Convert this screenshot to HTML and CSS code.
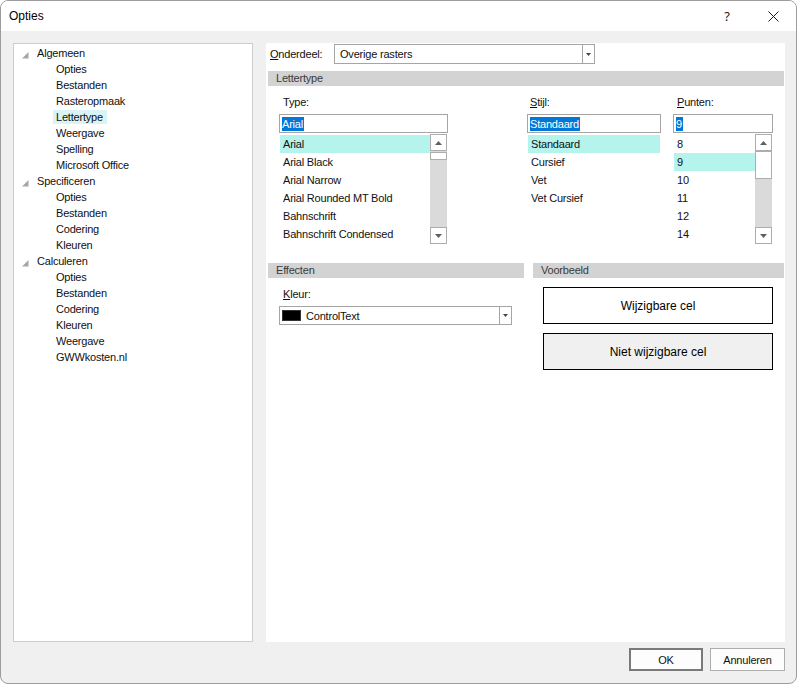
FILE: index.html
```html
<!DOCTYPE html>
<html lang="nl">
<head>
<meta charset="utf-8">
<title>Opties</title>
<link rel="stylesheet" href="styles.css">
</head>
<body>
<div class="window">
  <div class="titlebar">
    <span class="title">Opties</span>
    <span class="cap-btn help">?</span>
    <span class="cap-btn close">
      <svg width="11" height="11" viewBox="0 0 11 11"><path d="M0.5 0.5 L10.5 10.5 M10.5 0.5 L0.5 10.5" stroke="#1a1a1a" stroke-width="1" fill="none"/></svg>
    </span>
  </div>

  <div class="body">
    <div class="tree">
      <div class="row node"><svg class="exp" width="7" height="7" viewBox="0 0 7 7"><polygon points="6.5,0 6.5,6.5 0,6.5" fill="#a6a6a6"/></svg>Algemeen</div>
      <div class="row leaf">Opties</div>
      <div class="row leaf">Bestanden</div>
      <div class="row leaf">Rasteropmaak</div>
      <div class="row leaf sel"><span class="hl">Lettertype</span></div>
      <div class="row leaf">Weergave</div>
      <div class="row leaf">Spelling</div>
      <div class="row leaf">Microsoft Office</div>
      <div class="row node"><svg class="exp" width="7" height="7" viewBox="0 0 7 7"><polygon points="6.5,0 6.5,6.5 0,6.5" fill="#a6a6a6"/></svg>Specificeren</div>
      <div class="row leaf">Opties</div>
      <div class="row leaf">Bestanden</div>
      <div class="row leaf">Codering</div>
      <div class="row leaf">Kleuren</div>
      <div class="row node"><svg class="exp" width="7" height="7" viewBox="0 0 7 7"><polygon points="6.5,0 6.5,6.5 0,6.5" fill="#a6a6a6"/></svg>Calculeren</div>
      <div class="row leaf">Opties</div>
      <div class="row leaf">Bestanden</div>
      <div class="row leaf">Codering</div>
      <div class="row leaf">Kleuren</div>
      <div class="row leaf">Weergave</div>
      <div class="row leaf">GWWkosten.nl</div>
    </div>

    <div class="main">
      <div class="part-row">
        <span class="part-label"><u>O</u>nderdeel:</span>
        <div class="combo part-combo">
          <span class="combo-text">Overige rasters</span>
          <span class="combo-btn"><svg width="5" height="3" viewBox="0 0 5 3"><polygon points="0,0 5,0 2.5,3" fill="#444"/></svg></span>
        </div>
      </div>

      <div class="section-head top-head">Lettertype</div>

      <div class="font-row">
        <div class="col col-type">
          <div class="lbl">Type:</div>
          <div class="input"><span class="selected">Arial</span></div>
          <div class="list">
            <div class="items">
              <div class="item on">Arial</div>
              <div class="item">Arial Black</div>
              <div class="item">Arial Narrow</div>
              <div class="item">Arial Rounded MT Bold</div>
              <div class="item">Bahnschrift</div>
              <div class="item">Bahnschrift Condensed</div>
            </div>
            <div class="sb">
              <div class="sb-btn"><svg width="7" height="4" viewBox="0 0 7 4"><polygon points="0,4 7,4 3.5,0" fill="#606060"/></svg></div>
              <div class="thumb thumb-small"></div>
              <div class="sb-btn down"><svg width="7" height="4" viewBox="0 0 7 4"><polygon points="0,0 7,0 3.5,4" fill="#606060"/></svg></div>
            </div>
          </div>
        </div>

        <div class="col col-style">
          <div class="lbl"><u>S</u>tijl:</div>
          <div class="input"><span class="selected">Standaard</span></div>
          <div class="list">
            <div class="items">
              <div class="item on">Standaard</div>
              <div class="item">Cursief</div>
              <div class="item">Vet</div>
              <div class="item">Vet Cursief</div>
            </div>
          </div>
        </div>

        <div class="col col-size">
          <div class="lbl"><u>P</u>unten:</div>
          <div class="input"><span class="selected">9</span></div>
          <div class="list">
            <div class="items">
              <div class="item">8</div>
              <div class="item on">9</div>
              <div class="item">10</div>
              <div class="item">11</div>
              <div class="item">12</div>
              <div class="item">14</div>
            </div>
            <div class="sb">
              <div class="sb-btn"><svg width="7" height="4" viewBox="0 0 7 4"><polygon points="0,4 7,4 3.5,0" fill="#606060"/></svg></div>
              <div class="thumb thumb-big"></div>
              <div class="sb-btn down"><svg width="7" height="4" viewBox="0 0 7 4"><polygon points="0,0 7,0 3.5,4" fill="#606060"/></svg></div>
            </div>
          </div>
        </div>
      </div>

      <div class="lower">
        <div class="effects">
          <div class="section-head">Effecten</div>
          <div class="lbl kleur-lbl"><u>K</u>leur:</div>
          <div class="combo color-combo">
            <span class="swatch"></span>
            <span class="combo-text">ControlText</span>
            <span class="combo-btn"><svg width="5" height="3" viewBox="0 0 5 3"><polygon points="0,0 5,0 2.5,3" fill="#444"/></svg></span>
          </div>
        </div>
        <div class="preview">
          <div class="section-head">Voorbeeld</div>
          <div class="cell editable">Wijzigbare cel</div>
          <div class="cell readonly">Niet wijzigbare cel</div>
        </div>
      </div>
    </div>
  </div>

  <div class="footer">
    <button class="btn btn-default">OK</button>
    <button class="btn btn-cancel">Annuleren</button>
  </div>
</div>
</body>
</html>
```

FILE: styles.css
```css
* { box-sizing: border-box; }

html, body {
  margin: 0;
  padding: 0;
  background: #fff;
}

body {
  font-family: "Liberation Sans", Arial, sans-serif;
  font-size: 11px;
  letter-spacing: -0.2px;
  color: #111;
}

.window {
  width: 797px;
  height: 684px;
  border: 1px solid #9c9c9c;
  border-radius: 8px;
  background: #f0f0f0;
  overflow: hidden;
  display: flex;
  flex-direction: column;
}

/* title bar */
.titlebar {
  height: 30px;
  background: #fff;
  display: flex;
  align-items: center;
  padding-left: 8px;
  flex: none;
}
.title {
  font-size: 12px;
  letter-spacing: 0;
  color: #000;
  margin-right: auto;
}
.cap-btn {
  width: 46px;
  height: 30px;
  display: flex;
  align-items: center;
  justify-content: center;
}
.help {
  font-family: "Noto Sans", "Liberation Sans", sans-serif;
  font-size: 13px;
  letter-spacing: 0;
  color: #1a1a1a;
}
.close svg { display: block; }

/* body */
.body {
  display: flex;
  gap: 13px;
  padding: 12px 0 0 12px;
  flex: none;
}

.tree {
  width: 240px;
  height: 599px;
  border: 1px solid #cdcdcd;
  background: #fff;
  padding-top: 1px;
}
.row {
  height: 16px;
  line-height: 16px;
  display: flex;
  align-items: center;
  white-space: nowrap;
}
.node { padding-left: 8px; }
.exp {
  flex: none;
  align-self: flex-start;
  margin-top: 7px;
  margin-right: 8px;
}
.leaf { padding-left: 42px; }
.leaf.sel { padding-left: 39px; }
.hl {
  display: inline-block;
  height: 14px;
  line-height: 14px;
  padding: 0 4px 0 3px;
  background: #d9f4f4;
}

.main {
  width: 519px;
  height: 599px;
  background: #fff;
  padding: 1px 1px 0 2px;
}

/* onderdeel row */
.part-row {
  display: flex;
  align-items: center;
  height: 20px;
}
.part-label {
  width: 66px;
  padding-left: 2px;
}
.combo {
  height: 20px;
  border: 1px solid #a5a5a5;
  background: #fff;
  display: flex;
  align-items: center;
}
.part-combo { width: 261px; }
.combo-text {
  flex: 1;
  padding-left: 5px;
  white-space: nowrap;
}
.combo-btn {
  width: 12px;
  height: 100%;
  border-left: 1px solid #a5a5a5;
  display: flex;
  align-items: center;
  justify-content: center;
}
.combo-btn svg { display: block; }

.section-head {
  height: 15px;
  line-height: 15px;
  background: #d3d3d3;
  padding-left: 8px;
  color: #3a3a3a;
}
.top-head { margin-top: 7px; }

/* font row */
.font-row {
  display: flex;
  padding-left: 11px;
}
.col { display: flex; flex-direction: column; }
.col-type { width: 169px; }
.col-style { width: 134px; margin-left: 79px; }
.col-size { width: 100px; margin-left: 12px; }

.lbl {
  height: 14px;
  line-height: 14px;
  margin-top: 9px;
  margin-bottom: 5px;
  padding-left: 4px;
}
.col-style .lbl { padding-left: 3px; }

.input {
  height: 19px;
  border: 1px solid #a5a5a5;
  padding-left: 2px;
  display: flex;
  align-items: center;
}
.selected {
  background: #0078d7;
  color: #fff;
  height: 14px;
  line-height: 14px;
  padding-right: 1px;
}

.list {
  height: 110px;
  margin: 1px 1px 0;
  display: flex;
}
.items { flex: 1; padding-top: 1px; }
.item {
  height: 18px;
  line-height: 18px;
  padding-left: 3px;
  white-space: nowrap;
}
.item.on { background: #b5f3ed; }

.sb {
  width: 17px;
  background: #dadada;
  display: flex;
  flex-direction: column;
}
.sb-btn {
  height: 17px;
  border: 1px solid #adadad;
  background: #fff;
  display: flex;
  align-items: center;
  justify-content: center;
}
.sb-btn svg { display: block; }
.sb-btn.down { margin-top: auto; }
.thumb {
  border: 1px solid #adadad;
  background: #fff;
}
.thumb-small { height: 8px; margin-top: 1px; }
.thumb-big { height: 28px; }

/* lower row */
.lower {
  display: flex;
  margin-top: 19px;
}
.effects { width: 256px; }
.kleur-lbl {
  margin-top: 9px;
  margin-left: 11px;
  padding-left: 4px;
}
.color-combo {
  width: 233px;
  height: 19px;
  margin-left: 11px;
}
.swatch {
  flex: none;
  width: 19px;
  height: 11px;
  background: #000;
  border: 1px solid #333;
  margin-left: 2px;
}
.color-combo .combo-text { padding-left: 5px; }

.preview {
  width: 251px;
  margin-left: 9px;
}
.cell {
  width: 230px;
  height: 37px;
  margin-left: 10px;
  border: 1px solid #000;
  display: flex;
  align-items: center;
  justify-content: center;
  font-family: "Liberation Sans", Arial, sans-serif;
  font-size: 12px;
  letter-spacing: 0;
  color: #000;
}
.editable { margin-top: 9px; background: #fff; }
.readonly { margin-top: 9px; background: #f0f0f0; }

/* footer */
.footer {
  display: flex;
  justify-content: flex-end;
  gap: 7px;
  padding: 6px 11px 0 0;
}
.btn {
  height: 23px;
  font-family: "Liberation Sans", Arial, sans-serif;
  font-size: 11px;
  letter-spacing: -0.2px;
  color: #111;
  background: #fdfdfd;
  border: 1px solid #adadad;
  padding: 0;
  margin: 0;
}
.btn-default {
  width: 74px;
  border: 2px solid #7a7a7a;
}
.btn-cancel { width: 75px; }
```
